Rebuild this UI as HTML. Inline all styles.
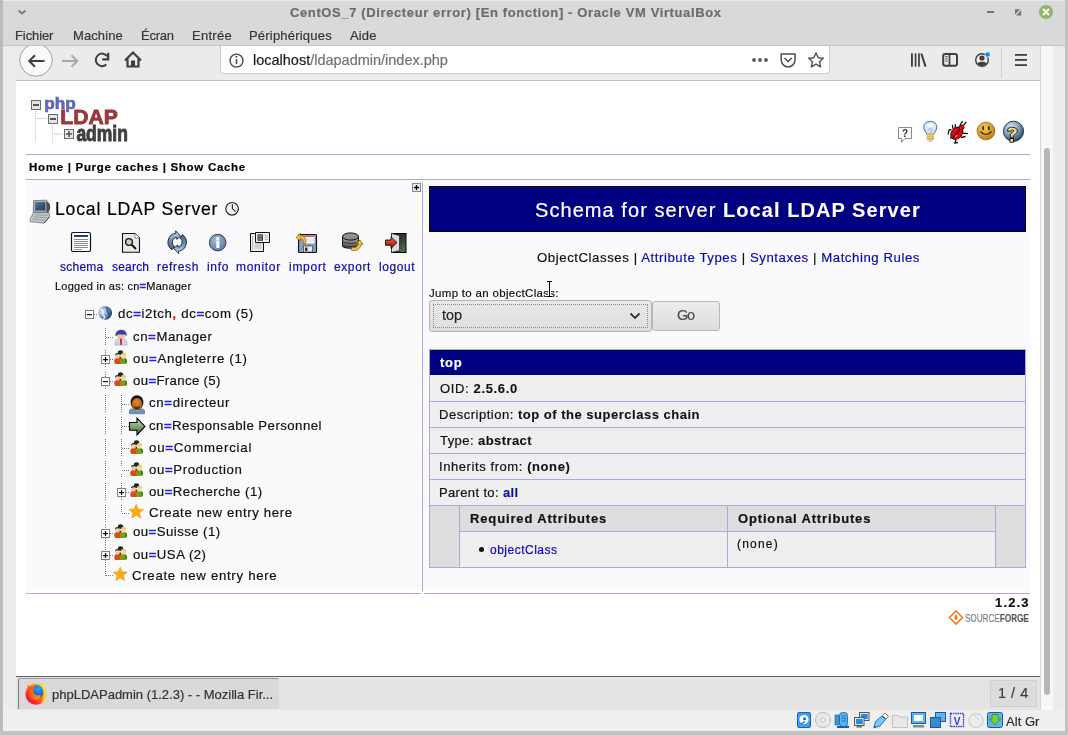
<!DOCTYPE html>
<html><head><meta charset="utf-8">
<style>
*{margin:0;padding:0;box-sizing:border-box}
html,body{width:1068px;height:735px;overflow:hidden;background:#d9d9d9;font-family:"Liberation Sans",sans-serif}
.a{position:absolute}
.tx{position:absolute;white-space:nowrap;line-height:1;-webkit-text-stroke:0.2px currentColor;will-change:transform}
.tx b{-webkit-text-stroke:0.1px currentColor}
.ln{position:absolute;background:#aaaad2}
svg{position:absolute;overflow:visible}
</style></head><body>
<!-- title bar -->
<div class="a" style="left:0;top:0;width:1068px;height:1px;background:#e9e9e9"></div>
<!-- left/right frame -->
<div class="a" style="left:0;top:45px;width:1068px;height:1px;background:#c4c4c4"></div>
<div class="a" style="left:0;top:0;width:3px;height:735px;background:#bcbcbc"></div>
<div class="a" style="left:3px;top:46px;width:13px;height:664px;background:#ececec"></div>
<div class="a" style="left:1040px;top:46px;width:1px;height:664px;background:#d4d4d4"></div>
<div class="a" style="left:1041px;top:46px;width:12px;height:664px;background:#f8f8f8"></div>
<div class="a" style="left:1053px;top:46px;width:12px;height:664px;background:#ececec"></div>
<div class="a" style="left:1044px;top:148px;width:6px;height:547px;background:#b6b6b6;border-radius:3px"></div>
<div class="a" style="left:1065px;top:0;width:3px;height:735px;background:#c2c2c2"></div>
<div class="a" style="left:0;top:731px;width:1068px;height:4px;background:#c2c2c2"></div>
<!-- firefox toolbar -->
<div class="a" style="left:16px;top:46px;width:1024px;height:34px;background:#ebebeb"></div>
<div class="a" style="left:16px;top:80px;width:1024px;height:1px;background:#c2c2c2"></div>
<div class="a" style="left:220px;top:46px;width:610px;height:28px;background:#fff;border:1px solid #c9c9c9;border-top:none;border-radius:0 0 4px 4px"></div>
<div class="a" style="left:1001px;top:47px;width:1px;height:31px;background:#cfcfcf"></div>
<!-- page -->
<div class="a" style="left:16px;top:81px;width:1024px;height:595px;background:#fff"></div>
<!-- taskbar -->
<div class="a" style="left:16px;top:676px;width:1024px;height:1px;background:#5e5e5e"></div>
<div class="a" style="left:16px;top:677px;width:1024px;height:33px;background:#e4e4e4"></div>
<div class="a" style="left:18px;top:678px;width:261px;height:31px;background:#d9d9d9;border-left:1px solid #7a7a7a;border-top:1px solid #9a9a9a;border-radius:2px 2px 0 0"></div>
<div class="a" style="left:990px;top:680px;width:47px;height:27px;background:#dcdcdc;border:1px solid #d0d0d0"></div>
<div class="a" style="left:3px;top:710px;width:1062px;height:21px;background:#efefef"></div>
<!-- ldap page body -->
<div class="ln" style="left:26px;top:154px;width:1004px;height:1px"></div>
<div class="ln" style="left:26px;top:179px;width:1004px;height:1px"></div>
<div class="a" style="left:26px;top:180px;width:1004px;height:411px;background:#fafafc"></div>
<div class="ln" style="left:26px;top:593px;width:1004px;height:1px"></div>
<div class="ln" style="left:422px;top:182px;width:1px;height:409px"></div><div class="a" style="left:421px;top:593px;width:3px;height:1px;background:#fff"></div>
<!-- schema header -->
<div class="a" style="left:429px;top:186px;width:597px;height:46px;background:#000080;border:1px solid #000"></div>
<!-- table -->
<div class="a" style="left:429px;top:349px;width:597px;height:219px;background:#efefef;border:1px solid #aaaad2"></div>
<div class="a" style="left:430px;top:350px;width:595px;height:25px;background:#000080"></div>
<div class="ln" style="left:430px;top:401px;width:595px;height:1px"></div>
<div class="ln" style="left:430px;top:427px;width:595px;height:1px"></div>
<div class="ln" style="left:430px;top:453px;width:595px;height:1px"></div>
<div class="ln" style="left:430px;top:479px;width:595px;height:1px"></div>
<div class="ln" style="left:430px;top:505px;width:595px;height:1px"></div>
<div class="a" style="left:430px;top:506px;width:29px;height:61px;background:#dedede"></div>
<div class="a" style="left:996px;top:506px;width:29px;height:61px;background:#dedede"></div>
<div class="a" style="left:460px;top:506px;width:535px;height:25px;background:#dedede"></div>
<div class="ln" style="left:459px;top:506px;width:1px;height:61px"></div>
<div class="ln" style="left:995px;top:506px;width:1px;height:61px"></div>
<div class="ln" style="left:727px;top:506px;width:1px;height:61px"></div>
<div class="ln" style="left:460px;top:531px;width:535px;height:1px"></div>
<div class="a" style="left:479px;top:547px;width:5px;height:5px;border-radius:50%;background:#111"></div>
<!-- select & go -->
<div class="a" style="left:429px;top:300px;width:223px;height:32px;border:1px solid #b4b4b4;border-radius:3px;background:linear-gradient(#e9e9e9,#dedede)"></div>
<div class="a" style="left:433px;top:304px;width:215px;height:24px;border:1px dotted #8a8a8a"></div>
<div class="a" style="left:652px;top:301px;width:68px;height:30px;border:1px solid #b9b9b9;border-radius:3px;background:linear-gradient(#ececec,#dddddd)"></div>
<svg class="ico" width="1068" height="735" viewBox="0 0 1068 735" style="left:0;top:0;position:absolute;will-change:transform"><defs>
<radialGradient id="globe" cx="0.3" cy="0.4" r="0.8"><stop offset="0" stop-color="#dfe8f2"/><stop offset="0.4" stop-color="#8aaed0"/><stop offset="0.8" stop-color="#2a5088"/><stop offset="1" stop-color="#0f2448"/></radialGradient>
<linearGradient id="grn" x1="0" y1="0" x2="0" y2="1"><stop offset="0" stop-color="#d4e6cc"/><stop offset="0.45" stop-color="#86aa7c"/><stop offset="1" stop-color="#3a6535"/></linearGradient>
<radialGradient id="smile" cx="0.4" cy="0.35" r="0.7"><stop offset="0" stop-color="#f7cf5a"/><stop offset="1" stop-color="#b57b10"/></radialGradient>
<radialGradient id="help" cx="0.38" cy="0.3" r="0.75"><stop offset="0" stop-color="#dce8f2"/><stop offset="0.5" stop-color="#84a2c0"/><stop offset="1" stop-color="#22405e"/></radialGradient>
<radialGradient id="info" cx="0.4" cy="0.35" r="0.7"><stop offset="0" stop-color="#a8bcd6"/><stop offset="1" stop-color="#5b7aa3"/></radialGradient>
<linearGradient id="refr" x1="0" y1="0" x2="0" y2="1"><stop offset="0" stop-color="#c8d8ea"/><stop offset="0.5" stop-color="#6f93bd"/><stop offset="1" stop-color="#3d6290"/></linearGradient>
<linearGradient id="scr" x1="0" y1="0" x2="1" y2="1"><stop offset="0" stop-color="#5a7896"/><stop offset="1" stop-color="#1e3a5a"/></linearGradient>
<radialGradient id="skin" cx="0.45" cy="0.35" r="0.7"><stop offset="0" stop-color="#e88a2a"/><stop offset="1" stop-color="#9a5010"/></radialGradient>
<linearGradient id="db" x1="0" y1="0" x2="0" y2="1"><stop offset="0" stop-color="#a8a8a8"/><stop offset="1" stop-color="#555"/></linearGradient>
<linearGradient id="door" x1="0" y1="0" x2="1" y2="1"><stop offset="0" stop-color="#000"/><stop offset="1" stop-color="#5c7c5c"/></linearGradient>
<linearGradient id="redar" x1="0" y1="0" x2="0" y2="1"><stop offset="0" stop-color="#ff6a4a"/><stop offset="1" stop-color="#a00000"/></linearGradient>
<linearGradient id="ffx" x1="0" y1="1" x2="1" y2="0"><stop offset="0" stop-color="#d8107a"/><stop offset="0.3" stop-color="#ff2a2a"/><stop offset="0.65" stop-color="#ff9a10"/><stop offset="1" stop-color="#ffe83a"/></linearGradient><radialGradient id="ffb" cx="0.6" cy="0.3" r="0.8"><stop offset="0" stop-color="#10b0ff"/><stop offset="1" stop-color="#2a2ab8"/></radialGradient><linearGradient id="ffo" x1="0" y1="0" x2="1" y2="1"><stop offset="0" stop-color="#ff3a1a"/><stop offset="1" stop-color="#ff9a10"/></linearGradient>
</defs>
<path d="M18.5 10.5 L22 13.5 L25.5 10.5" fill="none" stroke="#7a7a7a" stroke-width="1.8"/>
<rect x="987" y="11" width="7" height="2" fill="#707070"/>
<path d="M1015 9.3 H1020.2 L1015 14.5 Z M1021.2 10.3 V15.5 H1016 Z" fill="#737373"/>
<circle cx="1046" cy="12" r="7" fill="#8db56c"/><path d="M1043 9 L1049 15 M1049 9 L1043 15" stroke="#fff" stroke-width="2"/>
<clipPath id="tbclip"><rect x="16" y="46" width="1024" height="34"/></clipPath><circle cx="36" cy="60" r="16.3" fill="#f9f9f9" stroke="#9d9d9d" stroke-width="1" clip-path="url(#tbclip)"/>
<path d="M44.5 61 H29.5 M35 55.2 L29.2 61 L35 66.8" fill="none" stroke="#3d3f42" stroke-width="2"/>
<path d="M77.5 61 H62 M71.5 55.2 L77.3 61 L71.5 66.8" fill="none" stroke="#a9a9a9" stroke-width="2"/>
<path d="M107.2 56.2 A6.3 6.3 0 1 0 106.3 64.6" fill="none" stroke="#3d3f42" stroke-width="2"/><path d="M108.2 52.8 V59.4 H102.2" fill="none" stroke="#3d3f42" stroke-width="2.2"/>
<path d="M125 60.5 L133 52.5 L141 60.5" fill="none" stroke="#3d3f42" stroke-width="2.2" stroke-linejoin="miter"/><path d="M127.5 58.5 V66.5 H138.5 V58.5" fill="none" stroke="#3d3f42" stroke-width="2.2"/><rect x="131" y="60.5" width="4" height="6.5" fill="#3d3f42"/>
<clipPath id="urlclip"><rect x="0" y="46" width="1068" height="40"/></clipPath>
<circle cx="236.5" cy="60.6" r="6.5" fill="none" stroke="#4a4a4f" stroke-width="1.4"/><rect x="235.7" y="59" width="1.6" height="5" fill="#4a4a4f"/><circle cx="236.5" cy="56.8" r="1" fill="#4a4a4f"/>
<circle cx="754" cy="60" r="1.9" fill="#5a5a5f"/><circle cx="760" cy="60" r="1.9" fill="#5a5a5f"/><circle cx="766" cy="60" r="1.9" fill="#5a5a5f"/>
<path d="M781.2 54 H795 V60 A6.9 6.9 0 0 1 781.2 60 Z" fill="none" stroke="#505055" stroke-width="1.5"/><path d="M784.5 58 L788.1 61.6 L791.7 58" fill="none" stroke="#505055" stroke-width="1.5"/>
<path d="M816 53 L818.2 57.8 L823.3 58.3 L819.5 61.7 L820.6 66.8 L816 64.2 L811.4 66.8 L812.5 61.7 L808.7 58.3 L813.8 57.8 Z" fill="none" stroke="#505055" stroke-width="1.4" stroke-linejoin="round"/>
<rect x="911" y="53.3" width="1.9" height="13.4" fill="#3d3f42"/><rect x="914.7" y="53.3" width="1.7" height="13.4" fill="#3d3f42"/><rect x="918.1" y="53.3" width="1.7" height="13.4" fill="#3d3f42"/><path d="M921.3 53.5 L925.6 66.6" stroke="#3d3f42" stroke-width="2"/>
<rect x="943.2" y="54" width="13.8" height="11.8" rx="2" fill="none" stroke="#3d3f42" stroke-width="2"/><rect x="948.6" y="54" width="1.8" height="11.8" fill="#3d3f42"/><path d="M945.3 56.6 H947.5 M945.3 58.8 H947.5 M945.3 61 H947.5" stroke="#3d3f42" stroke-width="1"/>
<circle cx="982" cy="60" r="6.3" fill="none" stroke="#3d3f42" stroke-width="1.4"/><circle cx="982" cy="58" r="2.6" fill="#3d3f42"/><path d="M977.3 63.2 Q982 60.5 986.7 63.2 L985 65.3 Q982 66.5 979 65.3 Z" fill="#3d3f42"/><circle cx="987.6" cy="54.5" r="2.9" fill="#ebebeb"/><circle cx="987.6" cy="54.5" r="2.3" fill="#0a84ff"/>
<rect x="1015" y="54" width="12" height="1.8" fill="#3d3f42"/><rect x="1015" y="59" width="12" height="1.8" fill="#3d3f42"/><rect x="1015" y="64.2" width="12" height="1.8" fill="#3d3f42"/>
<g>
<rect x="31.5" y="100.5" width="9" height="9" fill="#e4e4e4" stroke="#6b6b6b" stroke-width="1"/><rect x="33.0" y="104.0" width="6" height="2" fill="#555"/>
<rect x="48.5" y="114.5" width="9" height="9" fill="#e4e4e4" stroke="#6b6b6b" stroke-width="1"/><rect x="50.0" y="118.0" width="6" height="2" fill="#555"/>
<rect x="64.5" y="129.5" width="9" height="9" fill="#e4e4e4" stroke="#6b6b6b" stroke-width="1"/><path d="M66 134 H72 M69 131 V137" stroke="#555" stroke-width="1.5"/>
<path d="M35.5 111 V143 M52.5 125 V143 M37 118.5 H47.5 M54 134 H63.5" stroke="#cfcfcf" stroke-width="1.3" stroke-dasharray="1.3 1"/>
</g>
<text x="44.2" y="109.4" font-family="Liberation Sans" font-weight="bold" font-size="17" fill="#6068b8" stroke="#6068b8" stroke-width="0.7" textLength="31.5" lengthAdjust="spacingAndGlyphs">php</text>
<text x="60.3" y="124.3" font-family="Liberation Sans" font-weight="bold" font-size="19.6" fill="#9a383b" stroke="#9a383b" stroke-width="0.8" textLength="57.5" lengthAdjust="spacingAndGlyphs">LDAP</text>
<text x="76.4" y="141.3" font-family="Liberation Sans" font-weight="bold" font-size="21.5" fill="#3e3e3e" stroke="#3e3e3e" stroke-width="0.9" textLength="51.5" lengthAdjust="spacingAndGlyphs">admin</text>
<path d="M898.5 127.5 H911.5 V138.5 H905 L901.5 142.5 V138.5 H898.5 Z" fill="#fafafa" stroke="#8a8a8a" stroke-width="1"/><text x="905" y="137" font-family="Liberation Sans" font-weight="bold" font-size="10" fill="#333" text-anchor="middle">?</text>
<path d="M930.2 121.4 C926 121.4 923.8 124.2 923.8 127.4 C923.8 130.4 926.6 132.2 927 134.4 H933.6 C934 132.2 936.8 130.4 936.8 127.4 C936.8 124.2 934.4 121.4 930.2 121.4 Z" fill="#dde8f4" stroke="#5a82c4" stroke-width="1.1"/><ellipse cx="930.2" cy="125.3" rx="3.2" ry="1.6" fill="#fff"/><path d="M928.2 130.5 C928 128.4 932.4 128.2 932.2 130.2 C932 131.4 930.6 131.8 930.4 133" fill="none" stroke="#7a9ad0" stroke-width="0.8"/><rect x="926.6" y="133.4" width="7.4" height="6.4" rx="1.2" fill="#cfae38"/><path d="M926.8 135.2 H933.8 M926.8 137.3 H933.8" stroke="#f2e4a0" stroke-width="0.9"/><ellipse cx="930.3" cy="141" rx="3" ry="0.9" fill="#999" opacity="0.5"/>
<g stroke="#111" stroke-width="1.3" fill="none"><path d="M951.5 129.5 L949 130 L948.2 134.5 M951.8 136 L950.5 139 M956 140 L954.8 143 L958 142.5 M962.5 133.2 L968 133.6 M960.8 137.5 L965.6 136.5 M962.4 126.5 L966.4 121.8 M959.8 125.5 L962.6 121.2 M955 128.5 L955.4 124.2 M953 129.2 L952.4 124.8"/></g><ellipse cx="956.8" cy="133.2" rx="5.2" ry="7" transform="rotate(42 956.8 133.2)" fill="#f00010" stroke="#111" stroke-width="0.9"/><ellipse cx="955.6" cy="135.6" rx="1.8" ry="1.2" fill="#ffb0b0" opacity="0.8"/><path d="M952.4 138 L961.2 128.6" stroke="#111" stroke-width="1.1"/><ellipse cx="961.6" cy="127.4" rx="2.5" ry="2.3" fill="#f00010" stroke="#111" stroke-width="0.8"/>
<circle cx="986" cy="131" r="9" fill="url(#smile)" stroke="#8a5a10" stroke-width="0.6"/><rect x="982.3" y="126" width="1.8" height="4.2" rx="0.9" fill="#3a2a08"/><rect x="987.9" y="126" width="1.8" height="4.2" rx="0.9" fill="#3a2a08"/><path d="M980.5 131.5 Q986 137.5 991.5 131.5" fill="none" stroke="#3a2a08" stroke-width="1.2"/>
<circle cx="1013.5" cy="131.3" r="10.1" fill="url(#help)" stroke="#1a2a40" stroke-width="0.9"/><path d="M1007.6 131.2 C1007.2 127.6 1010 127.2 1012.4 127.3 C1016 127.4 1017.6 129.2 1017.3 131.4 C1017 133.6 1014.6 134.2 1013.6 135.4 L1013.4 137.4 L1010.4 137.4 L1010.4 134.6 C1011 132.6 1013.6 132 1013.8 130.9 C1013.8 130.1 1012.8 129.9 1012.2 130 C1011.2 130.2 1011.2 131 1011.2 131.2 Z" fill="#ecd98e" stroke="#111" stroke-width="0.9"/><rect x="1009.9" y="138.6" width="3.6" height="3.6" fill="#ecd98e" stroke="#111" stroke-width="0.9"/>
<path d="M45.5 200.8 Q50.2 202 50.2 207 Q50.2 212.5 45.5 213.5 Z" fill="#4a4d50"/><path d="M33.6 200.6 L46.8 200.2 L46.6 212.4 L33.2 212.2 Z" fill="#aeb3b6" stroke="#5f6366" stroke-width="0.7"/><path d="M35.2 202.2 L45.4 202 L45.3 210.6 L35 210.5 Z" fill="url(#scr)"/><path d="M33.5 212.6 H49.2 L49.4 216.8 L44 223.2 L30.2 221.6 L30.4 218.4 Z" fill="#c3c7c9" stroke="#62666a" stroke-width="0.7"/><path d="M32 219 L44.5 220.3 M33.5 216.8 L46.5 217.8 M35.5 214.8 L47.8 215.4" stroke="#8d9295" stroke-width="0.8"/><path d="M44.2 223 L49.4 216.8" stroke="#3a3d40" stroke-width="1"/>
<circle cx="232.1" cy="208.8" r="6.3" fill="#f2f2f2" stroke="#222" stroke-width="1.2"/><path d="M232.4 204.3 V208.6 L235.6 211.6" fill="none" stroke="#222" stroke-width="1.1"/>
<rect x="71.5" y="232.5" width="19" height="19" rx="1.5" fill="#fff" stroke="#111" stroke-width="1.2"/><rect x="74" y="235" width="14" height="2" fill="#1e3e70"/>
<rect x="74" y="239" width="14" height="1" fill="#8a8a8a"/>
<rect x="74" y="241" width="14" height="1" fill="#8a8a8a"/>
<rect x="74" y="243" width="14" height="1" fill="#8a8a8a"/>
<rect x="74" y="245" width="14" height="1" fill="#8a8a8a"/>
<rect x="74" y="247" width="14" height="1" fill="#8a8a8a"/>
<rect x="74" y="249" width="8" height="1" fill="#9a9a9a"/>
<path d="M122.5 233.5 H135 L139.5 238 V252.3 H122.5 Z" fill="#e8e8e6" stroke="#111" stroke-width="1.1"/><path d="M135 233.5 V238 H139.5" fill="#fff" stroke="#666" stroke-width="0.7"/><circle cx="129" cy="242" r="3.4" fill="#c8cfb8" stroke="#111" stroke-width="1.3"/><path d="M131.5 244.5 L136 249" stroke="#111" stroke-width="2"/>
<g stroke="#1a1a1a" stroke-width="0.9" fill="url(#refr)"><path d="M174.33 246.30 L171.92 249.74 A9.2 9.2 0 0 1 175.92 233.09 L175.60 230.81 L180.75 236.05 L176.80 239.33 L176.50 237.25 A5.0 5.0 0 0 0 174.33 246.30 Z"/><path d="M174.33 246.30 L171.92 249.74 A9.2 9.2 0 0 1 175.92 233.09 L175.60 230.81 L180.75 236.05 L176.80 239.33 L176.50 237.25 A5.0 5.0 0 0 0 174.33 246.30 Z" transform="rotate(180 177.2 242.2)"/></g>
<circle cx="217.7" cy="242.6" r="8.3" fill="url(#info)" stroke="#2a3a50" stroke-width="1"/><rect x="216.3" y="237.2" width="3" height="2.6" fill="#fff"/><rect x="216.3" y="240.6" width="3" height="7.4" fill="#fff"/>
<path d="M250.5 233.5 H263.5 V251.5 H250.5 Z" fill="#ececec" stroke="#111" stroke-width="1"/><path d="M252.5 236 V250 M254.5 244 H261.5 M254.5 246 H261.5 M254.5 248 H261.5" stroke="#aaa" stroke-width="0.8"/><path d="M255.5 232.5 H269.5 V242.5 H255.5 Z" fill="#f0f0ea" stroke="#111" stroke-width="1"/><rect x="257.5" y="234.3" width="5.5" height="6.5" fill="#333"/><rect x="258.3" y="235" width="4" height="2.5" fill="#b86a30"/><rect x="258.3" y="238" width="4" height="2.3" fill="#4a7ab8"/><path d="M264.5 235.5 H268 M264.5 237.5 H268 M264.5 239.5 H268" stroke="#aaa" stroke-width="0.8"/>
<rect x="298.5" y="234.5" width="18" height="18" rx="1" fill="#7f9fc4" stroke="#111" stroke-width="1.1"/><rect x="303" y="235.5" width="11.5" height="8" fill="#fff"/><rect x="303" y="235.5" width="11.5" height="1.4" fill="#d84040"/><path d="M303.5 239 H314 M303.5 241 H314" stroke="#bbb" stroke-width="0.6"/><rect x="303.5" y="246" width="9" height="6" fill="#eee" stroke="#222" stroke-width="0.6"/><rect x="305" y="247.5" width="2.5" height="3.5" fill="#333"/><path d="M305.5 243.5 C307 239 304 235 300 236 L300.5 233 L296 237.5 L300 241 L300 238.8 C303 238.5 304 241 303 244 Z" fill="#f2c232" stroke="#7a5a10" stroke-width="0.7"/>
<path d="M342.5 236.5 V246 C342.5 249 358.5 249 358.5 246 V236.5" fill="url(#db)" stroke="#111" stroke-width="1"/><ellipse cx="350.5" cy="236.5" rx="8" ry="3.6" fill="#8e8e8e" stroke="#111" stroke-width="1"/><path d="M342.5 241.3 C342.5 244 358.5 244 358.5 241.3 M342.5 244.5 C342.5 247.2 358.5 247.2 358.5 244.5" fill="none" stroke="#222" stroke-width="0.8"/><path d="M351 250 C355 252 361 249 361 244 L363 244.5 L360 240 L356 243.5 L358.5 243.5 C358 246.5 355 248.5 352 247 Z" fill="#f2c232" stroke="#7a5a10" stroke-width="0.7"/>
<rect x="391.5" y="233.5" width="14.5" height="19" fill="url(#door)" stroke="#000" stroke-width="1"/><path d="M391.5 233.5 L399.5 235.5 V250.5 L391.5 252.5 Z" fill="#dcdcdc" stroke="#222" stroke-width="0.7"/><path d="M385.5 240 H391 V236.8 L397 242.6 L391 248.4 V245.2 H385.5 Z" fill="url(#redar)" stroke="#111" stroke-width="0.9"/>
<rect x="85.5" y="310.5" width="8" height="8" fill="#fff" stroke="#808080" stroke-width="1"/><rect x="87" y="314" width="5" height="1.2" fill="#111"/>
<path d="M94 314.5 H97" stroke="#777" stroke-width="1" stroke-dasharray="1 1"/>
<circle cx="105.2" cy="312.8" r="6.9" fill="url(#globe)"/><path d="M100 310 Q103 309 103.5 312 Q101.5 314 104 316 Q106 318 103 319" fill="none" stroke="#f4f8fc" stroke-width="1.4" opacity="0.85"/><path d="M106 307.5 Q108.5 309 107 311 Q109.5 312.5 108.5 315" fill="none" stroke="#1a3a70" stroke-width="1.2" opacity="0.7"/>
<path d="M105.5 328 V345" stroke="#777" stroke-width="1" stroke-dasharray="1 1"/>
<path d="M105.5 350 V355" stroke="#777" stroke-width="1" stroke-dasharray="1 1"/>
<path d="M105.5 364 V367" stroke="#777" stroke-width="1" stroke-dasharray="1 1"/>
<path d="M105.5 372 V377" stroke="#777" stroke-width="1" stroke-dasharray="1 1"/>
<path d="M105.5 386 V389" stroke="#777" stroke-width="1" stroke-dasharray="1 1"/>
<path d="M105.5 395 V412" stroke="#777" stroke-width="1" stroke-dasharray="1 1"/>
<path d="M105.5 417 V434" stroke="#777" stroke-width="1" stroke-dasharray="1 1"/>
<path d="M105.5 439 V456" stroke="#777" stroke-width="1" stroke-dasharray="1 1"/>
<path d="M105.5 461 V478" stroke="#777" stroke-width="1" stroke-dasharray="1 1"/>
<path d="M105.5 483 V500" stroke="#777" stroke-width="1" stroke-dasharray="1 1"/>
<path d="M105.5 505 V522" stroke="#777" stroke-width="1" stroke-dasharray="1 1"/>
<path d="M105.5 525 V529" stroke="#777" stroke-width="1" stroke-dasharray="1 1"/>
<path d="M105.5 538 V545" stroke="#777" stroke-width="1" stroke-dasharray="1 1"/>
<path d="M105.5 547 V551" stroke="#777" stroke-width="1" stroke-dasharray="1 1"/>
<path d="M105.5 560 V567" stroke="#777" stroke-width="1" stroke-dasharray="1 1"/>
<path d="M105.5 569 V576" stroke="#777" stroke-width="1" stroke-dasharray="1 1"/>
<path d="M106 337.5 H113" stroke="#777" stroke-width="1" stroke-dasharray="1 1"/>
<path d="M110 359.5 H113" stroke="#777" stroke-width="1" stroke-dasharray="1 1"/>
<path d="M110 381.5 H113" stroke="#777" stroke-width="1" stroke-dasharray="1 1"/>
<path d="M110 533.5 H113" stroke="#777" stroke-width="1" stroke-dasharray="1 1"/>
<path d="M110 555.5 H113" stroke="#777" stroke-width="1" stroke-dasharray="1 1"/>
<path d="M106 575.5 H113" stroke="#777" stroke-width="1" stroke-dasharray="1 1"/>
<path d="M121.5 395 V412" stroke="#777" stroke-width="1" stroke-dasharray="1 1"/>
<path d="M121.5 417 V434" stroke="#777" stroke-width="1" stroke-dasharray="1 1"/>
<path d="M121.5 439 V456" stroke="#777" stroke-width="1" stroke-dasharray="1 1"/>
<path d="M121.5 461 V466" stroke="#777" stroke-width="1" stroke-dasharray="1 1"/>
<path d="M121.5 474 V478" stroke="#777" stroke-width="1" stroke-dasharray="1 1"/>
<path d="M121.5 483 V488" stroke="#777" stroke-width="1" stroke-dasharray="1 1"/>
<path d="M121.5 497 V500" stroke="#777" stroke-width="1" stroke-dasharray="1 1"/>
<path d="M121.5 505 V513" stroke="#777" stroke-width="1" stroke-dasharray="1 1"/>
<path d="M122 404.5 H129" stroke="#777" stroke-width="1" stroke-dasharray="1 1"/>
<path d="M122 426.5 H129" stroke="#777" stroke-width="1" stroke-dasharray="1 1"/>
<path d="M122 448.5 H129" stroke="#777" stroke-width="1" stroke-dasharray="1 1"/>
<path d="M122 470.5 H129" stroke="#777" stroke-width="1" stroke-dasharray="1 1"/>
<path d="M126 492.5 H129" stroke="#777" stroke-width="1" stroke-dasharray="1 1"/>
<path d="M122 513.5 H129" stroke="#777" stroke-width="1" stroke-dasharray="1 1"/>
<rect x="101.5" y="355.5" width="8" height="8" fill="#fff" stroke="#808080" stroke-width="1"/><rect x="103" y="359" width="5" height="1.2" fill="#111"/><rect x="104.9" y="357" width="1.2" height="5" fill="#111"/>
<rect x="101.5" y="377.5" width="8" height="8" fill="#fff" stroke="#808080" stroke-width="1"/><rect x="103" y="381" width="5" height="1.2" fill="#111"/>
<rect x="117.5" y="488.5" width="8" height="8" fill="#fff" stroke="#808080" stroke-width="1"/><rect x="119" y="492" width="5" height="1.2" fill="#111"/><rect x="120.9" y="490" width="1.2" height="5" fill="#111"/>
<rect x="101.5" y="529.5" width="8" height="8" fill="#fff" stroke="#808080" stroke-width="1"/><rect x="103" y="533" width="5" height="1.2" fill="#111"/><rect x="104.9" y="531" width="1.2" height="5" fill="#111"/>
<rect x="101.5" y="551.5" width="8" height="8" fill="#fff" stroke="#808080" stroke-width="1"/><rect x="103" y="555" width="5" height="1.2" fill="#111"/><rect x="104.9" y="553" width="1.2" height="5" fill="#111"/>
<g transform="translate(114,327.6)"><path d="M1 17.5 C1 12.5 3 10.5 7 10.5 C11 10.5 13 12.5 13 17.5 Z" fill="#d0d4e0" stroke="#9aa0b0" stroke-width="0.6"/><path d="M6 10.5 L6.2 17.5 H7.8 L8 10.5 Z" fill="#e02020"/><ellipse cx="7" cy="7" rx="4.6" ry="4.2" fill="#f5c49a"/><path d="M1.8 8.5 C0.2 0.8 13.8 0.2 12.4 8.2 C11.8 6.8 10.2 6.4 8.4 7 C6.4 5.8 3.8 6.2 1.8 8.5 Z" fill="#3444b4" stroke="#28308a" stroke-width="0.4"/></g>
<g transform="translate(114,350)"><ellipse cx="6.5" cy="2.6" rx="2.6" ry="2.3" fill="#1a2a1a"/><path d="M0.3 11 C0.3 8.5 2 8 4 8 C6 8 7.2 8.5 7.2 11 L7 14 H1.5 C0.6 13.5 0.3 12.5 0.3 11 Z" fill="#e04818"/><ellipse cx="3.6" cy="5.8" rx="2.5" ry="2.8" fill="#e8d0a8"/><path d="M1 5.2 C1 2.2 6.2 2.2 6.3 4.8 C5 4 2.5 4 1 5.2 Z" fill="#1e2228"/><rect x="5.5" y="6.5" width="2" height="2.5" fill="#a02070"/><path d="M5.8 11 C5.8 8.8 7.5 8 9.5 8 C11.5 8 12.9 8.8 12.9 11 C12.9 12.5 12.2 14 11 14 H6.2 Z" fill="#78a010"/><path d="M11 8.3 C12.5 9 13 10 13 11.5 C13 12.6 12.5 13.5 11.8 14 Z" fill="#2a8010"/><ellipse cx="9.4" cy="5.8" rx="2.5" ry="2.8" fill="#f0d8a8"/><path d="M6.8 5.5 C6.6 2.4 12.4 2.2 12.3 5.6 C11 4.3 8.5 4.3 6.8 5.5 Z" fill="#e8c848"/></g>
<g transform="translate(114,372)"><ellipse cx="6.5" cy="2.6" rx="2.6" ry="2.3" fill="#1a2a1a"/><path d="M0.3 11 C0.3 8.5 2 8 4 8 C6 8 7.2 8.5 7.2 11 L7 14 H1.5 C0.6 13.5 0.3 12.5 0.3 11 Z" fill="#e04818"/><ellipse cx="3.6" cy="5.8" rx="2.5" ry="2.8" fill="#e8d0a8"/><path d="M1 5.2 C1 2.2 6.2 2.2 6.3 4.8 C5 4 2.5 4 1 5.2 Z" fill="#1e2228"/><rect x="5.5" y="6.5" width="2" height="2.5" fill="#a02070"/><path d="M5.8 11 C5.8 8.8 7.5 8 9.5 8 C11.5 8 12.9 8.8 12.9 11 C12.9 12.5 12.2 14 11 14 H6.2 Z" fill="#78a010"/><path d="M11 8.3 C12.5 9 13 10 13 11.5 C13 12.6 12.5 13.5 11.8 14 Z" fill="#2a8010"/><ellipse cx="9.4" cy="5.8" rx="2.5" ry="2.8" fill="#f0d8a8"/><path d="M6.8 5.5 C6.6 2.4 12.4 2.2 12.3 5.6 C11 4.3 8.5 4.3 6.8 5.5 Z" fill="#e8c848"/></g>
<g transform="translate(130,440)"><ellipse cx="6.5" cy="2.6" rx="2.6" ry="2.3" fill="#1a2a1a"/><path d="M0.3 11 C0.3 8.5 2 8 4 8 C6 8 7.2 8.5 7.2 11 L7 14 H1.5 C0.6 13.5 0.3 12.5 0.3 11 Z" fill="#e04818"/><ellipse cx="3.6" cy="5.8" rx="2.5" ry="2.8" fill="#e8d0a8"/><path d="M1 5.2 C1 2.2 6.2 2.2 6.3 4.8 C5 4 2.5 4 1 5.2 Z" fill="#1e2228"/><rect x="5.5" y="6.5" width="2" height="2.5" fill="#a02070"/><path d="M5.8 11 C5.8 8.8 7.5 8 9.5 8 C11.5 8 12.9 8.8 12.9 11 C12.9 12.5 12.2 14 11 14 H6.2 Z" fill="#78a010"/><path d="M11 8.3 C12.5 9 13 10 13 11.5 C13 12.6 12.5 13.5 11.8 14 Z" fill="#2a8010"/><ellipse cx="9.4" cy="5.8" rx="2.5" ry="2.8" fill="#f0d8a8"/><path d="M6.8 5.5 C6.6 2.4 12.4 2.2 12.3 5.6 C11 4.3 8.5 4.3 6.8 5.5 Z" fill="#e8c848"/></g>
<g transform="translate(130,462)"><ellipse cx="6.5" cy="2.6" rx="2.6" ry="2.3" fill="#1a2a1a"/><path d="M0.3 11 C0.3 8.5 2 8 4 8 C6 8 7.2 8.5 7.2 11 L7 14 H1.5 C0.6 13.5 0.3 12.5 0.3 11 Z" fill="#e04818"/><ellipse cx="3.6" cy="5.8" rx="2.5" ry="2.8" fill="#e8d0a8"/><path d="M1 5.2 C1 2.2 6.2 2.2 6.3 4.8 C5 4 2.5 4 1 5.2 Z" fill="#1e2228"/><rect x="5.5" y="6.5" width="2" height="2.5" fill="#a02070"/><path d="M5.8 11 C5.8 8.8 7.5 8 9.5 8 C11.5 8 12.9 8.8 12.9 11 C12.9 12.5 12.2 14 11 14 H6.2 Z" fill="#78a010"/><path d="M11 8.3 C12.5 9 13 10 13 11.5 C13 12.6 12.5 13.5 11.8 14 Z" fill="#2a8010"/><ellipse cx="9.4" cy="5.8" rx="2.5" ry="2.8" fill="#f0d8a8"/><path d="M6.8 5.5 C6.6 2.4 12.4 2.2 12.3 5.6 C11 4.3 8.5 4.3 6.8 5.5 Z" fill="#e8c848"/></g>
<g transform="translate(130,483)"><ellipse cx="6.5" cy="2.6" rx="2.6" ry="2.3" fill="#1a2a1a"/><path d="M0.3 11 C0.3 8.5 2 8 4 8 C6 8 7.2 8.5 7.2 11 L7 14 H1.5 C0.6 13.5 0.3 12.5 0.3 11 Z" fill="#e04818"/><ellipse cx="3.6" cy="5.8" rx="2.5" ry="2.8" fill="#e8d0a8"/><path d="M1 5.2 C1 2.2 6.2 2.2 6.3 4.8 C5 4 2.5 4 1 5.2 Z" fill="#1e2228"/><rect x="5.5" y="6.5" width="2" height="2.5" fill="#a02070"/><path d="M5.8 11 C5.8 8.8 7.5 8 9.5 8 C11.5 8 12.9 8.8 12.9 11 C12.9 12.5 12.2 14 11 14 H6.2 Z" fill="#78a010"/><path d="M11 8.3 C12.5 9 13 10 13 11.5 C13 12.6 12.5 13.5 11.8 14 Z" fill="#2a8010"/><ellipse cx="9.4" cy="5.8" rx="2.5" ry="2.8" fill="#f0d8a8"/><path d="M6.8 5.5 C6.6 2.4 12.4 2.2 12.3 5.6 C11 4.3 8.5 4.3 6.8 5.5 Z" fill="#e8c848"/></g>
<g transform="translate(114,524)"><ellipse cx="6.5" cy="2.6" rx="2.6" ry="2.3" fill="#1a2a1a"/><path d="M0.3 11 C0.3 8.5 2 8 4 8 C6 8 7.2 8.5 7.2 11 L7 14 H1.5 C0.6 13.5 0.3 12.5 0.3 11 Z" fill="#e04818"/><ellipse cx="3.6" cy="5.8" rx="2.5" ry="2.8" fill="#e8d0a8"/><path d="M1 5.2 C1 2.2 6.2 2.2 6.3 4.8 C5 4 2.5 4 1 5.2 Z" fill="#1e2228"/><rect x="5.5" y="6.5" width="2" height="2.5" fill="#a02070"/><path d="M5.8 11 C5.8 8.8 7.5 8 9.5 8 C11.5 8 12.9 8.8 12.9 11 C12.9 12.5 12.2 14 11 14 H6.2 Z" fill="#78a010"/><path d="M11 8.3 C12.5 9 13 10 13 11.5 C13 12.6 12.5 13.5 11.8 14 Z" fill="#2a8010"/><ellipse cx="9.4" cy="5.8" rx="2.5" ry="2.8" fill="#f0d8a8"/><path d="M6.8 5.5 C6.6 2.4 12.4 2.2 12.3 5.6 C11 4.3 8.5 4.3 6.8 5.5 Z" fill="#e8c848"/></g>
<g transform="translate(114,546)"><ellipse cx="6.5" cy="2.6" rx="2.6" ry="2.3" fill="#1a2a1a"/><path d="M0.3 11 C0.3 8.5 2 8 4 8 C6 8 7.2 8.5 7.2 11 L7 14 H1.5 C0.6 13.5 0.3 12.5 0.3 11 Z" fill="#e04818"/><ellipse cx="3.6" cy="5.8" rx="2.5" ry="2.8" fill="#e8d0a8"/><path d="M1 5.2 C1 2.2 6.2 2.2 6.3 4.8 C5 4 2.5 4 1 5.2 Z" fill="#1e2228"/><rect x="5.5" y="6.5" width="2" height="2.5" fill="#a02070"/><path d="M5.8 11 C5.8 8.8 7.5 8 9.5 8 C11.5 8 12.9 8.8 12.9 11 C12.9 12.5 12.2 14 11 14 H6.2 Z" fill="#78a010"/><path d="M11 8.3 C12.5 9 13 10 13 11.5 C13 12.6 12.5 13.5 11.8 14 Z" fill="#2a8010"/><ellipse cx="9.4" cy="5.8" rx="2.5" ry="2.8" fill="#f0d8a8"/><path d="M6.8 5.5 C6.6 2.4 12.4 2.2 12.3 5.6 C11 4.3 8.5 4.3 6.8 5.5 Z" fill="#e8c848"/></g>
<g transform="translate(129,395)"><path d="M0 19.2 V15.8 C0 14.2 2 13.6 4 13.6 H12 C14 13.6 16 14.2 16 15.8 V19.2 Z" fill="#6f90b8"/><path d="M6.3 13.6 L8 16 L9.7 13.6 Z" fill="#eef"/><ellipse cx="8" cy="7.6" rx="6.4" ry="7.4" fill="#111"/><ellipse cx="8" cy="9" rx="5.3" ry="6" fill="url(#skin)"/><path d="M4.6 11 Q8 18 11.4 11 Q8 12.8 4.6 11 Z" fill="#5a2a0a"/></g>
<path d="M129.5 422.5 H137 V418 L145 426.4 L137 434.8 V430.3 H129.5 Z" fill="url(#grn)" stroke="#000" stroke-width="1.1"/>
<polygon points="136.20,504.00 138.26,508.96 143.62,509.39 139.54,512.88 140.78,518.11 136.20,515.31 131.62,518.11 132.86,512.88 128.78,509.39 134.14,508.96" fill="#f6ac12" stroke="#e89a00" stroke-width="0.5"/>
<polygon points="120.20,567.00 122.18,571.77 127.33,572.18 123.41,575.54 124.61,580.57 120.20,577.88 115.79,580.57 116.99,575.54 113.07,572.18 118.22,571.77" fill="#f6ac12" stroke="#e89a00" stroke-width="0.5"/>
<path d="M630.5 313.5 L635 318 L639.5 313.5" fill="none" stroke="#333" stroke-width="1.8"/>
<rect x="412.5" y="183.5" width="8" height="8" fill="#e6eef0" stroke="#7f8a8a" stroke-width="1"/><path d="M414 187.5 H419 M416.5 185 V190" stroke="#000" stroke-width="1.3"/>
<path d="M956 611 L962.5 617.5 L956 624 L949.5 617.5 Z" fill="none" stroke="#f07a20" stroke-width="1.6"/><path d="M956 614 C958 616 958 619 956 620.5 C954 619 954 616 956 614 Z" fill="#f07a20"/>
<circle cx="36.1" cy="694.2" r="10.6" fill="url(#ffx)"/><circle cx="37" cy="691.8" r="6.6" fill="url(#ffb)"/><path d="M27.5 684.5 L30 688 C31.5 686.6 33.5 686.4 35 687.2 L33.6 689.6 C32.8 691.4 33.4 693.6 35 694.6 C36.8 695.8 39.2 695.6 40.6 694.4 C41 697.6 38.4 699.6 35.6 699.6 C31.4 699.6 28.6 696 28.6 692 C28.6 689.4 27.6 687 27.5 684.5 Z" fill="url(#ffo)"/><path d="M39.2 682 C44.6 684.6 47.4 689.6 46.6 695.4 C46 699.6 43.4 702.4 40.6 703.6 C43.6 700 44.6 695.6 43.4 691.4 C42.6 688 40.8 685.4 39.2 682 Z" fill="#ffd83a" opacity="0.95"/>
<g transform="translate(797,712)"><rect x="0.5" y="0.5" width="13" height="15" rx="1.5" fill="#3aa0f0" stroke="#1a62c0"/><circle cx="7" cy="7.5" r="4.6" fill="#fff"/><circle cx="7.5" cy="6.8" r="1.5" fill="#1a62c0"/><path d="M4 12 L8 9.5" stroke="#1a62c0" stroke-width="1.2"/></g>
<g transform="translate(815,712)"><circle cx="8" cy="8" r="7.5" fill="#e8e8e8" stroke="#bbb"/><circle cx="8" cy="8" r="2" fill="#fff" stroke="#bbb"/></g>
<g transform="translate(835,712)"><rect x="0" y="3" width="4" height="10" fill="#3a9ae0" stroke="#1a5aa0" stroke-width="0.6"/><rect x="4.5" y="0.5" width="8" height="14" rx="3" fill="#5ab4f0" stroke="#1a5aa0" stroke-width="0.8"/><path d="M6.5 4 H11 M6.5 6.5 H11 M6.5 9 H11" stroke="#1a5aa0" stroke-width="0.8"/><rect x="2" y="14" width="12" height="2" fill="#1a5aa0"/></g>
<g transform="translate(854,712)"><rect x="5.5" y="0.5" width="9.5" height="8" fill="#fff" stroke="#555"/><rect x="6.8" y="1.8" width="7" height="5.4" fill="#2a8ae0"/><rect x="0.5" y="5.5" width="9.5" height="8" fill="#fff" stroke="#555"/><rect x="1.8" y="6.8" width="7" height="5.4" fill="#2a8ae0"/><rect x="2.5" y="14" width="5.5" height="1.6" fill="#777"/></g>
<g transform="translate(873,712)"><path d="M1 15.5 L2.5 9.5 L9 4 L12.5 7.5 L7 14 Z" fill="#7cc8f8" stroke="#1a6ad0" stroke-width="1"/><path d="M9.5 3.5 L12 1 L15.5 4.5 L13 7 Z" fill="#fff" stroke="#555" stroke-width="0.8"/><circle cx="1.8" cy="15" r="1.2" fill="#1a6ad0"/></g>
<g transform="translate(892,712)"><path d="M0.5 3.5 H6 L7.5 5 H15.5 V15.5 H0.5 Z" fill="#e8e8e8" stroke="#c0c0c0"/></g>
<g transform="translate(911,712)"><rect x="0.5" y="0.5" width="14" height="11" fill="#5ab4f0" stroke="#1a5aa0"/><rect x="3" y="3" width="9" height="6" fill="#fff"/><rect x="2" y="13" width="11" height="2.5" fill="#888"/></g>
<g transform="translate(930,712)"><rect x="5.5" y="0.5" width="10" height="9" fill="#5ab4f0" stroke="#1a5aa0"/><rect x="0.5" y="5.5" width="10" height="10" fill="#3a8ad0" stroke="#1a5aa0"/></g>
<g transform="translate(949,712)"><rect x="1.5" y="1.5" width="13" height="13" fill="#e8f0ff" stroke="#3a3ab8" stroke-width="1.4" stroke-dasharray="1.5 0.8"/><text x="8" y="12.5" font-family="Liberation Sans" font-weight="bold" font-size="10" fill="#3a3ab8" text-anchor="middle">V</text></g>
<g transform="translate(968,712)"><ellipse cx="8" cy="8.5" rx="7" ry="7" fill="#ececec" stroke="#c8c8c8" transform="rotate(40 8 8.5)"/><path d="M6 3 L11 8" stroke="#c8c8c8"/></g>
<g transform="translate(987,712)"><rect x="0.5" y="0.5" width="15" height="15" rx="2" fill="#5ab4f0" stroke="#1a5aa0"/><path d="M5 2.5 H11 V7 H13.5 L8 13 L2.5 7 H5 Z" fill="#7ad03a" stroke="#3a8010" stroke-width="0.8"/></g>
</svg>
<div id="ttl" class="tx" style="left:290.40px;top:5.90px;font-size:13px;font-weight:bold;color:#6d6d6d;letter-spacing:0.617px;">CentOS_7 (Directeur error) [En fonction] - Oracle VM VirtualBox</div>
<div id="m1" class="tx" style="left:14.50px;top:29.00px;font-size:13px;font-weight:normal;color:#363636;letter-spacing:-0.100px;">Fichier</div>
<div id="m2" class="tx" style="left:72.60px;top:29.00px;font-size:13px;font-weight:normal;color:#363636;letter-spacing:0.102px;">Machine</div>
<div id="m3" class="tx" style="left:140.50px;top:29.00px;font-size:13px;font-weight:normal;color:#363636;letter-spacing:-0.250px;">Écran</div>
<div id="m4" class="tx" style="left:191.50px;top:29.00px;font-size:13px;font-weight:normal;color:#363636;letter-spacing:0.280px;">Entrée</div>
<div id="m5" class="tx" style="left:249.00px;top:29.00px;font-size:13px;font-weight:normal;color:#363636;letter-spacing:0.202px;">Périphériques</div>
<div id="m6" class="tx" style="left:350.00px;top:29.00px;font-size:13px;font-weight:normal;color:#363636;letter-spacing:0.136px;">Aide</div>
<div id="url1" class="tx" style="left:253.20px;top:52.53px;font-size:14.5px;font-weight:normal;color:#737373;letter-spacing:-0.007px;"><span style="color:#1b1b1b">localhost</span>/ldapadmin/index.php</div>
<div id="hlinks" class="tx" style="left:29.20px;top:162.37px;font-size:11.5px;font-weight:bold;color:#000;letter-spacing:0.706px;">Home | Purge caches | Show Cache</div>
<div id="srv" class="tx" style="left:55.00px;top:200.70px;font-size:17.6px;font-weight:normal;color:#000;letter-spacing:0.823px;">Local LDAP Server</div>
<div id="l_schema" class="tx" style="left:59.90px;top:260.74px;font-size:12px;font-weight:normal;color:#0c0caa;letter-spacing:0.240px;">schema</div>
<div id="l_search" class="tx" style="left:112.00px;top:260.74px;font-size:12px;font-weight:normal;color:#0c0caa;letter-spacing:0.200px;">search</div>
<div id="l_refresh" class="tx" style="left:157.00px;top:260.74px;font-size:12px;font-weight:normal;color:#0c0caa;letter-spacing:0.667px;">refresh</div>
<div id="l_info" class="tx" style="left:207.00px;top:260.74px;font-size:12px;font-weight:normal;color:#0c0caa;letter-spacing:0.667px;">info</div>
<div id="l_monitor" class="tx" style="left:236.00px;top:260.74px;font-size:12px;font-weight:normal;color:#0c0caa;letter-spacing:0.698px;">monitor</div>
<div id="l_import" class="tx" style="left:288.60px;top:260.74px;font-size:12px;font-weight:normal;color:#0c0caa;letter-spacing:0.720px;">import</div>
<div id="l_export" class="tx" style="left:334.00px;top:260.74px;font-size:12px;font-weight:normal;color:#0c0caa;letter-spacing:0.600px;">export</div>
<div id="l_logout" class="tx" style="left:378.50px;top:260.74px;font-size:12px;font-weight:normal;color:#0c0caa;letter-spacing:0.600px;">logout</div>
<div id="logged" class="tx" style="left:54.80px;top:280.89px;font-size:11px;font-weight:normal;color:#111;letter-spacing:0.241px;">Logged in as: cn<span style="color:#2020e8;-webkit-text-stroke:0.6px #2020e8">=</span>Manager</div>
<div id="tr1" class="tx" style="left:117.50px;top:307.23px;font-size:13.2px;font-weight:normal;color:#111;letter-spacing:0.632px;">dc<span style="color:#2020e8;-webkit-text-stroke:0.6px #2020e8">=</span>i2tch<span style="color:#e00;-webkit-text-stroke:0.6px #e00">,</span> dc<span style="color:#2020e8;-webkit-text-stroke:0.6px #2020e8">=</span>com (5)</div>
<div id="tr2" class="tx" style="left:133.20px;top:330.03px;font-size:13.2px;font-weight:normal;color:#111;letter-spacing:0.582px;">cn<span style="color:#2020e8;-webkit-text-stroke:0.6px #2020e8">=</span>Manager</div>
<div id="tr3" class="tx" style="left:133.20px;top:351.73px;font-size:13.2px;font-weight:normal;color:#111;letter-spacing:0.674px;">ou<span style="color:#2020e8;-webkit-text-stroke:0.6px #2020e8">=</span>Angleterre (1)</div>
<div id="tr4" class="tx" style="left:133.20px;top:373.63px;font-size:13.2px;font-weight:normal;color:#111;letter-spacing:0.352px;">ou<span style="color:#2020e8;-webkit-text-stroke:0.6px #2020e8">=</span>France (5)</div>
<div id="tr5" class="tx" style="left:149.10px;top:396.43px;font-size:13.2px;font-weight:normal;color:#111;letter-spacing:0.688px;">cn<span style="color:#2020e8;-webkit-text-stroke:0.6px #2020e8">=</span>directeur</div>
<div id="tr6" class="tx" style="left:149.10px;top:418.63px;font-size:13.2px;font-weight:normal;color:#111;letter-spacing:0.469px;">cn<span style="color:#2020e8;-webkit-text-stroke:0.6px #2020e8">=</span>Responsable Personnel</div>
<div id="tr7" class="tx" style="left:149.10px;top:440.83px;font-size:13.2px;font-weight:normal;color:#111;letter-spacing:0.801px;">ou<span style="color:#2020e8;-webkit-text-stroke:0.6px #2020e8">=</span>Commercial</div>
<div id="tr8" class="tx" style="left:149.10px;top:462.63px;font-size:13.2px;font-weight:normal;color:#111;letter-spacing:0.616px;">ou<span style="color:#2020e8;-webkit-text-stroke:0.6px #2020e8">=</span>Production</div>
<div id="tr9" class="tx" style="left:149.10px;top:484.83px;font-size:13.2px;font-weight:normal;color:#111;letter-spacing:0.479px;">ou<span style="color:#2020e8;-webkit-text-stroke:0.6px #2020e8">=</span>Recherche (1)</div>
<div id="tr10" class="tx" style="left:148.50px;top:505.63px;font-size:13.2px;font-weight:normal;color:#111;letter-spacing:0.630px;">Create new entry here</div>
<div id="tr11" class="tx" style="left:132.90px;top:525.43px;font-size:13.2px;font-weight:normal;color:#111;letter-spacing:0.449px;">ou<span style="color:#2020e8;-webkit-text-stroke:0.6px #2020e8">=</span>Suisse (1)</div>
<div id="tr12" class="tx" style="left:132.90px;top:547.63px;font-size:13.2px;font-weight:normal;color:#111;letter-spacing:0.492px;">ou<span style="color:#2020e8;-webkit-text-stroke:0.6px #2020e8">=</span>USA (2)</div>
<div id="tr13" class="tx" style="left:132.00px;top:568.63px;font-size:13.2px;font-weight:normal;color:#111;letter-spacing:0.710px;">Create new entry here</div>
<div id="schemah" class="tx" style="left:535.00px;top:200.07px;font-size:20px;font-weight:normal;color:#fff;letter-spacing:1.059px;">Schema for server <b>Local LDAP Server</b></div>
<div id="nav" class="tx" style="left:536.50px;top:250.83px;font-size:13.2px;font-weight:normal;color:#111;letter-spacing:0.569px;">ObjectClasses <span style="color:#111">|</span> <span style="color:#0c0caa">Attribute Types</span> | <span style="color:#0c0caa">Syntaxes</span> | <span style="color:#0c0caa">Matching Rules</span></div>
<div id="jump" class="tx" style="left:429.00px;top:287.77px;font-size:11.5px;font-weight:normal;color:#111;letter-spacing:0.309px;">Jump to an objectClass:</div>
<div id="seltop" class="tx" style="left:442.20px;top:308.43px;font-size:14.5px;font-weight:normal;color:#222;letter-spacing:-0.100px;">top</div>
<div id="go" class="tx" style="left:677.00px;top:308.43px;font-size:14.5px;font-weight:normal;color:#505050;letter-spacing:-1.400px;">Go</div>
<div id="th_top" class="tx" style="left:440.20px;top:355.90px;font-size:13px;font-weight:bold;color:#fff;letter-spacing:0.700px;">top</div>
<div id="r_oid" class="tx" style="left:440.20px;top:381.80px;font-size:13px;font-weight:normal;color:#111;letter-spacing:0.638px;">OID: <b>2.5.6.0</b></div>
<div id="r_desc" class="tx" style="left:439.20px;top:407.60px;font-size:13px;font-weight:normal;color:#111;letter-spacing:0.512px;">Description: <b>top of the superclass chain</b></div>
<div id="r_type" class="tx" style="left:440.20px;top:433.70px;font-size:13px;font-weight:normal;color:#111;letter-spacing:0.430px;">Type: <b>abstract</b></div>
<div id="r_inh" class="tx" style="left:439.20px;top:459.80px;font-size:13px;font-weight:normal;color:#111;letter-spacing:0.580px;">Inherits from: <b>(none)</b></div>
<div id="r_par" class="tx" style="left:439.20px;top:485.70px;font-size:13px;font-weight:normal;color:#111;letter-spacing:0.353px;">Parent to: <b style="color:#0c0caa">all</b></div>
<div id="req" class="tx" style="left:469.50px;top:512.00px;font-size:13px;font-weight:bold;color:#111;letter-spacing:0.857px;">Required Attributes</div>
<div id="opt" class="tx" style="left:738.00px;top:512.20px;font-size:13px;font-weight:bold;color:#111;letter-spacing:0.844px;">Optional Attributes</div>
<div id="objc" class="tx" style="left:489.90px;top:543.74px;font-size:12px;font-weight:normal;color:#0c0caa;letter-spacing:0.500px;">objectClass</div>
<div id="none2" class="tx" style="left:737.00px;top:537.84px;font-size:12px;font-weight:normal;color:#111;letter-spacing:1.200px;">(none)</div>
<div id="ver" class="tx" style="left:994.50px;top:596.40px;font-size:13px;font-weight:bold;color:#111;letter-spacing:1.150px;">1.2.3</div>
<div id="sf" class="tx" style="left:965.00px;top:612.69px;font-size:11px;font-weight:normal;color:#666;transform-origin:0 0;transform:scaleX(0.7413);"><span style="color:#777;">SOURCE</span><span style="color:#555;font-weight:bold">FORGE</span></div>
<div id="task" class="tx" style="left:51.50px;top:688.00px;font-size:13px;font-weight:normal;color:#333;letter-spacing:0.000px;">phpLDAPadmin (1.2.3) - - Mozilla Fir...</div>
<div id="pg" class="tx" style="left:998.00px;top:686.03px;font-size:14.5px;font-weight:normal;color:#3c3c3c;letter-spacing:0.500px;">1 / 4</div>
<div id="altgr" class="tx" style="left:1006.20px;top:714.70px;font-size:13px;font-weight:normal;color:#2e2e2e;letter-spacing:0.040px;">Alt Gr</div>
<svg width="1068" height="735" viewBox="0 0 1068 735" style="left:0;top:0;position:absolute"><path d="M547 281.5 H552 M549.5 281.5 V296.5 M547 296.5 H552" fill="none" stroke="#fff" stroke-width="3"/><path d="M547 281.5 H552 M549.5 281.5 V296.5 M547 296.5 H552" fill="none" stroke="#000" stroke-width="1"/></svg>
</body></html>
